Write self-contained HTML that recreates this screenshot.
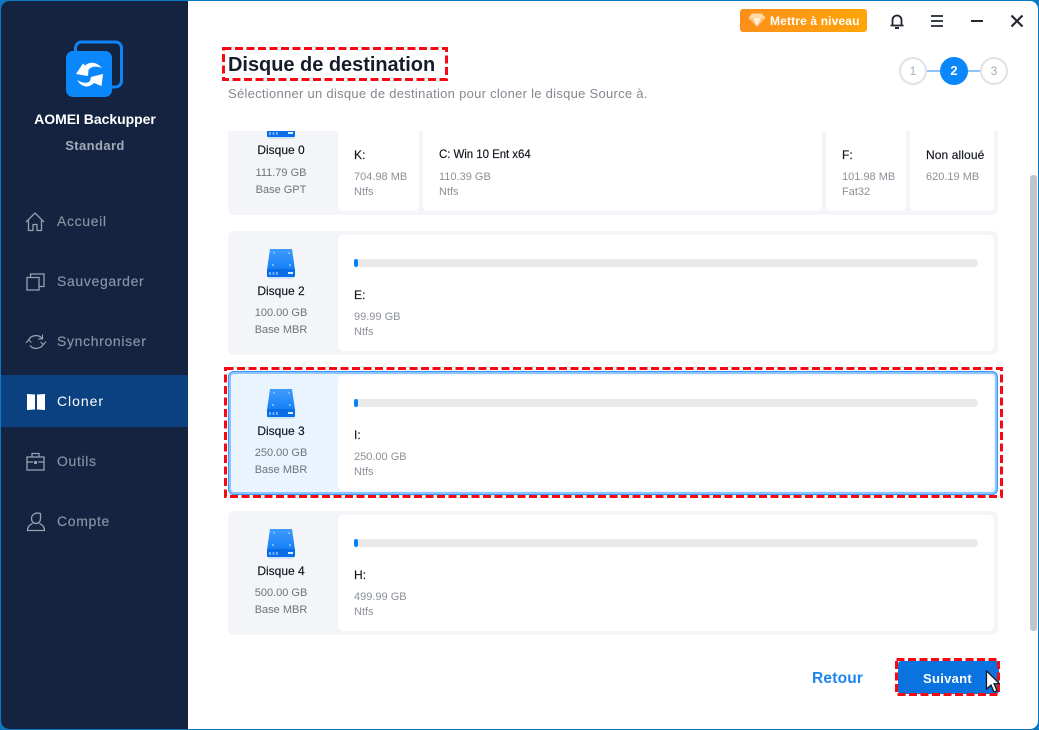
<!DOCTYPE html>
<html lang="fr"><head><meta charset="utf-8"><title>AOMEI Backupper</title>
<style>
*{box-sizing:border-box;margin:0;padding:0}
html,body{width:1039px;height:730px;overflow:hidden;background:#0a78c2;font-family:"Liberation Sans",sans-serif}
.abs,.t{position:absolute}
.t{white-space:nowrap;line-height:16px}
#win{position:absolute;left:1px;top:1px;width:1037px;height:728px;background:#fff;border-radius:8px;overflow:hidden}
#side{position:absolute;left:0;top:0;width:187px;height:728px;background:#14233f}
.nav{font-size:14px;color:#8a94a5;letter-spacing:.65px;left:56px;-webkit-text-stroke:.15px #8a94a5}
.sb{position:absolute}
.card{position:absolute;left:228px;width:770px;height:124px;background:#f4f5f8;border-radius:6px}
.inner{position:absolute;left:110px;top:4px;width:656px;height:116px;background:#fff;border-radius:5px}
.bar{position:absolute;left:16px;top:24px;width:624px;height:8px;border-radius:4px;background:#e9e9e9}
.bar i{position:absolute;left:0;top:0;width:4px;height:8px;border-radius:4px;background:#0a80f5}
.dn{position:absolute;width:110px;text-align:center;left:-2px;font-size:12px;color:#10141c;top:52px;line-height:16px;letter-spacing:0;-webkit-text-stroke:.15px #10141c}
.ds{position:absolute;width:110px;text-align:center;left:-2px;font-size:11px;color:#6f737b;line-height:16.5px;top:74px}
.lt{position:absolute;font-size:12px;color:#10141c;line-height:16px;white-space:nowrap;letter-spacing:.1px;-webkit-text-stroke:.15px #10141c}
.gr{position:absolute;font-size:11px;color:#8b9098;line-height:15px;white-space:nowrap}
.disk{position:absolute;left:39px;top:17px}
.part{position:absolute;top:0;background:#fff;border-radius:0 0 5px 5px}
.circ{position:absolute;width:28px;height:28px;border-radius:50%;background:#fff;border:2px solid #dfe2e8;text-align:center;font-size:12px;line-height:24px;color:#a9adb5}
</style></head><body>
<svg width="0" height="0" style="position:absolute"><defs>
<linearGradient id="dg" x1="0" y1="0" x2="0" y2="1"><stop offset="0" stop-color="#3f9bff"/><stop offset="1" stop-color="#1480f5"/></linearGradient>
<g id="hd"><path d="M3 1h22l3 21H0z" fill="url(#dg)"/><path d="M0 21h28v7a1 1 0 0 1-1 1H1a1 1 0 0 1-1-1z" fill="#0a6de8"/><rect x="1" y="29" width="26" height="2" fill="#a9d1fb" opacity=".45"/><rect x="2" y="24" width="2" height="3" fill="#6fb0fa"/><rect x="5.500" y="24" width="2" height="3" fill="#6fb0fa"/><rect x="9" y="24" width="2" height="3" fill="#6fb0fa"/><rect x="21" y="24" width="5" height="2" fill="#d8ebff"/><rect x="6" y="4" width="2" height="2" fill="#7ab8ff"/><rect x="21" y="4" width="2" height="2" fill="#7ab8ff"/><rect x="5" y="16" width="2" height="2" fill="#7ab8ff"/><rect x="22" y="16" width="2" height="2" fill="#7ab8ff"/></g>
</defs></svg>
<div id="win">
<div id="side">
<svg class="sb" style="left:64px;top:39px" width="60" height="60" viewBox="0 0 60 60">
<rect x="10.500" y="2" width="46" height="45" rx="6" fill="none" stroke="#0f84f8" stroke-width="3"/>
<rect x="1" y="11" width="46" height="46" rx="7" fill="#0a88fb"/>
<g transform="translate(-65 -40)" fill="#fff">
<path d="M76 74 83 63.500 85 65.500C90 61 97 62 102 68 97 66 91 66 88.500 70L88 76z"/>
<path d="M103 74 101.500 86 94 83C89 88 82 88 77 80 82 83 87 84 90 81L91 77z"/>
</g>
</svg>
<div class="t" style="left:0;width:188px;text-align:center;top:110px;color:#fff;font-size:14px;font-weight:700;letter-spacing:-.03px">AOMEI Backupper</div>
<div class="t" style="left:0;width:188px;text-align:center;top:137px;color:#a3abb9;font-size:13px;font-weight:700;letter-spacing:.4px">Standard</div>

<svg class="sb" style="left:24px;top:210px" width="22" height="22" viewBox="0 0 22 22" fill="none" stroke="#98a1b0" stroke-width="1.300"><path d="M1 11 10 2l9 9M3.500 9.500V19.500h4.500v-6h4v6h4.500V9.500"/></svg>
<div class="t nav" style="top:212px">Accueil</div>
<svg class="sb" style="left:24px;top:271px" width="22" height="22" viewBox="0 0 22 22" fill="none" stroke="#98a1b0" stroke-width="1.300"><rect x="2" y="5.500" width="12" height="12.500"/><path d="M5.500 5.500V2H19v12.500h-5"/></svg>
<div class="t nav" style="top:272px">Sauvegarder</div>
<svg class="sb" style="left:24px;top:330px" width="22" height="22" viewBox="0 0 22 22" fill="none" stroke="#98a1b0" stroke-width="1.300"><path d="M3.500 9.500C5 4.500 13 2.500 17 7.500M18.500 12.500C17 17.500 9 19.500 5 14.500"/><path d="M17.500 3.500v4.500h-4.500M1 12l2.500-3 3 2.500M21 10.500l-2.500 3-3-2.500" stroke-width="1.100"/></svg>
<div class="t nav" style="top:332px">Synchroniser</div>
<div class="sb" style="left:0;top:374px;width:187px;height:52px;background:#0b4180"></div>
<svg class="sb" style="left:25px;top:392px" width="20" height="18" viewBox="0 0 20 18"><path d="M1 1 9 1.500v15L1 17zM19 1l-8 .5v15l8 .5z" fill="#fff"/></svg>
<div class="t" style="left:56px;top:392px;font-size:14px;color:#fff;letter-spacing:.95px">Cloner</div>
<svg class="sb" style="left:24px;top:451px" width="22" height="20" viewBox="0 0 22 20" fill="none" stroke="#98a1b0" stroke-width="1.300"><rect x="2" y="5" width="17" height="13"/><path d="M7 5V1.500h7V5M2 10h6M13 10h6"/><rect x="9" y="9" width="3" height="3" fill="#98a1b0" stroke="none"/></svg>
<div class="t nav" style="top:452px">Outils</div>
<svg class="sb" style="left:24px;top:510px" width="22" height="22" viewBox="0 0 22 22" fill="none" stroke="#98a1b0" stroke-width="1.300"><path d="M15.500 2.500C10 1 6.500 4 6.500 7.500c0 3 2 5 4.500 5s4.500-2 4.500-5zM7.500 12.500C4 14 2.500 16 2.500 19.500h17c0-3.500-1.500-5.500-5-7"/></svg>
<div class="t nav" style="top:512px">Compte</div>
</div>
</div>

<!-- top bar -->
<div class="abs" style="left:740px;top:9px;width:127px;height:23px;border-radius:3px;background:linear-gradient(90deg,#fb8f1a,#ffa50a)"></div>
<svg class="abs" style="left:748px;top:13px" width="18" height="14" viewBox="0 0 18 14"><path d="M4 .5h10L17.500 5 9 13.500.5 5z" fill="#ffd9a6"/><path d="M.5 5h17L9 13.500z" fill="#ffc27a"/><path d="M5 5h8L9 13.500z" fill="#fff0dc"/></svg>
<div class="t" style="left:770px;top:12.500px;font-size:12px;font-weight:700;color:#fff;letter-spacing:.15px">Mettre à niveau</div>
<svg class="abs" style="left:888px;top:12px" width="18" height="18" viewBox="0 0 18 18" fill="none" stroke="#1f2530" stroke-width="1.800"><path d="M2.500 13.500h13M4.500 13.500V8a4.500 4.500 0 0 1 9 0v5.500"/><path d="M7 16h4" stroke-width="2"/></svg>
<svg class="abs" style="left:930px;top:14px" width="14" height="14" viewBox="0 0 14 14" stroke="#1f2530" stroke-width="1.800"><path d="M1 2h12M1 7h12M1 12h12"/></svg>
<svg class="abs" style="left:970px;top:14px" width="14" height="14" viewBox="0 0 14 14" stroke="#2a2430" stroke-width="2"><path d="M1 7h12"/></svg>
<svg class="abs" style="left:1010px;top:14px" width="14" height="14" viewBox="0 0 14 14" stroke="#2a2430" stroke-width="2.200"><path d="M1.500 1.500l11 11M12.500 1.500l-11 11"/></svg>

<!-- steps -->
<div class="abs" style="left:925px;top:70px;width:60px;height:2px;background:#8ec5fb"></div>
<div class="circ" style="left:899px;top:57px">1</div>
<div class="circ" style="left:940px;top:57px;background:#0a88fb;border-color:#0a88fb;color:#fff;font-weight:700;font-size:13px">2</div>
<div class="circ" style="left:980px;top:57px">3</div>

<!-- heading -->
<div class="t" style="left:228px;top:53px;font-size:20px;line-height:24px;font-weight:700;color:#161d2a;letter-spacing:-.03px">Disque de destination</div>
<div class="t" style="left:228px;top:85.500px;font-size:13px;color:#84888f;letter-spacing:.28px">Sélectionner un disque de destination pour cloner le disque Source à.</div>

<!-- list clipped -->
<div class="abs" style="left:188px;top:131px;width:840px;height:510px;overflow:hidden">
 <div class="card" style="left:40px;top:-40px">
  <div class="inner" style="background:none">
   <div class="part" style="left:0;width:81px;height:116px"><div class="lt" style="left:16px;top:52px">K:</div><div class="gr" style="left:16px;top:75px">704.98 MB<br>Ntfs</div></div>
   <div class="part" style="left:85px;width:399px;height:116px"><div class="lt" style="left:16px;top:52px;font-size:11.500px;letter-spacing:-.06px">C: Win 10 Ent x64</div><div class="gr" style="left:16px;top:75px">110.39 GB<br>Ntfs</div></div>
   <div class="part" style="left:488px;width:80px;height:116px"><div class="lt" style="left:16px;top:52px">F:</div><div class="gr" style="left:16px;top:75px">101.98 MB<br>Fat32</div></div>
   <div class="part" style="left:572px;width:84px;height:116px"><div class="lt" style="left:16px;top:52px">Non alloué</div><div class="gr" style="left:16px;top:75px">620.19 MB</div></div>
  </div>
  <svg class="disk" width="30" height="33"><use href="#hd"/></svg>
  <div class="dn" style="top:51px">Disque 0</div>
  <div class="ds">111.79 GB<br>Base GPT</div>
 </div>
 <div class="card" style="left:40px;top:100px">
  <div class="inner"><div class="bar"><i></i></div><div class="lt" style="left:16px;top:52px">E:</div><div class="gr" style="left:16px;top:75px">99.99 GB<br>Ntfs</div></div>
  <svg class="disk" width="30" height="33"><use href="#hd"/></svg>
  <div class="dn">Disque 2</div>
  <div class="ds">100.00 GB<br>Base MBR</div>
 </div>
 <div class="card" style="left:40px;top:240px;background:#e9f4ff;box-shadow:inset 0 0 0 1px #3d97f7,inset 0 0 0 3px #8cc4fb">
  <div class="inner"><div class="bar"><i></i></div><div class="lt" style="left:16px;top:52px">I:</div><div class="gr" style="left:16px;top:75px">250.00 GB<br>Ntfs</div></div>
  <svg class="disk" width="30" height="33"><use href="#hd"/></svg>
  <div class="dn">Disque 3</div>
  <div class="ds">250.00 GB<br>Base MBR</div>
 </div>
 <div class="card" style="left:40px;top:380px">
  <div class="inner"><div class="bar"><i></i></div><div class="lt" style="left:16px;top:52px">H:</div><div class="gr" style="left:16px;top:75px">499.99 GB<br>Ntfs</div></div>
  <svg class="disk" width="30" height="33"><use href="#hd"/></svg>
  <div class="dn">Disque 4</div>
  <div class="ds">500.00 GB<br>Base MBR</div>
 </div>
</div>

<!-- scrollbar -->
<div class="abs" style="left:1030px;top:175px;width:7px;height:456px;border-radius:3px;background:#c0c4cc"></div>

<!-- buttons -->
<div class="t" style="left:812px;top:670.500px;font-size:15.500px;font-weight:700;color:#1a85f0;letter-spacing:.2px">Retour</div>
<div class="abs" style="left:898px;top:661px;width:101px;height:33px;border-radius:3px;background:#0a73df"></div>
<div class="t" style="left:923px;top:670.500px;font-size:13px;font-weight:700;color:#fff;letter-spacing:.3px">Suivant</div>

<!-- red dashed highlights -->
<svg class="abs" style="left:0;top:0;z-index:5" width="1039" height="730" fill="none" stroke="#f50a14" stroke-width="3" stroke-dasharray="8 3.500">
<rect x="223.500" y="48.500" width="223" height="31"/>
<rect x="225.500" y="368.500" width="776" height="128"/>
<rect x="896.500" y="659.500" width="102" height="35"/>
</svg>
<svg class="abs" style="left:985px;top:670px;z-index:6" width="15" height="24" viewBox="0 0 15 24"><path d="M1.500 1v18l4.500-4 3 7 3-1.300-3-7h5.500z" fill="#fff" stroke="#111" stroke-width="1.200"/></svg>
</body></html>
